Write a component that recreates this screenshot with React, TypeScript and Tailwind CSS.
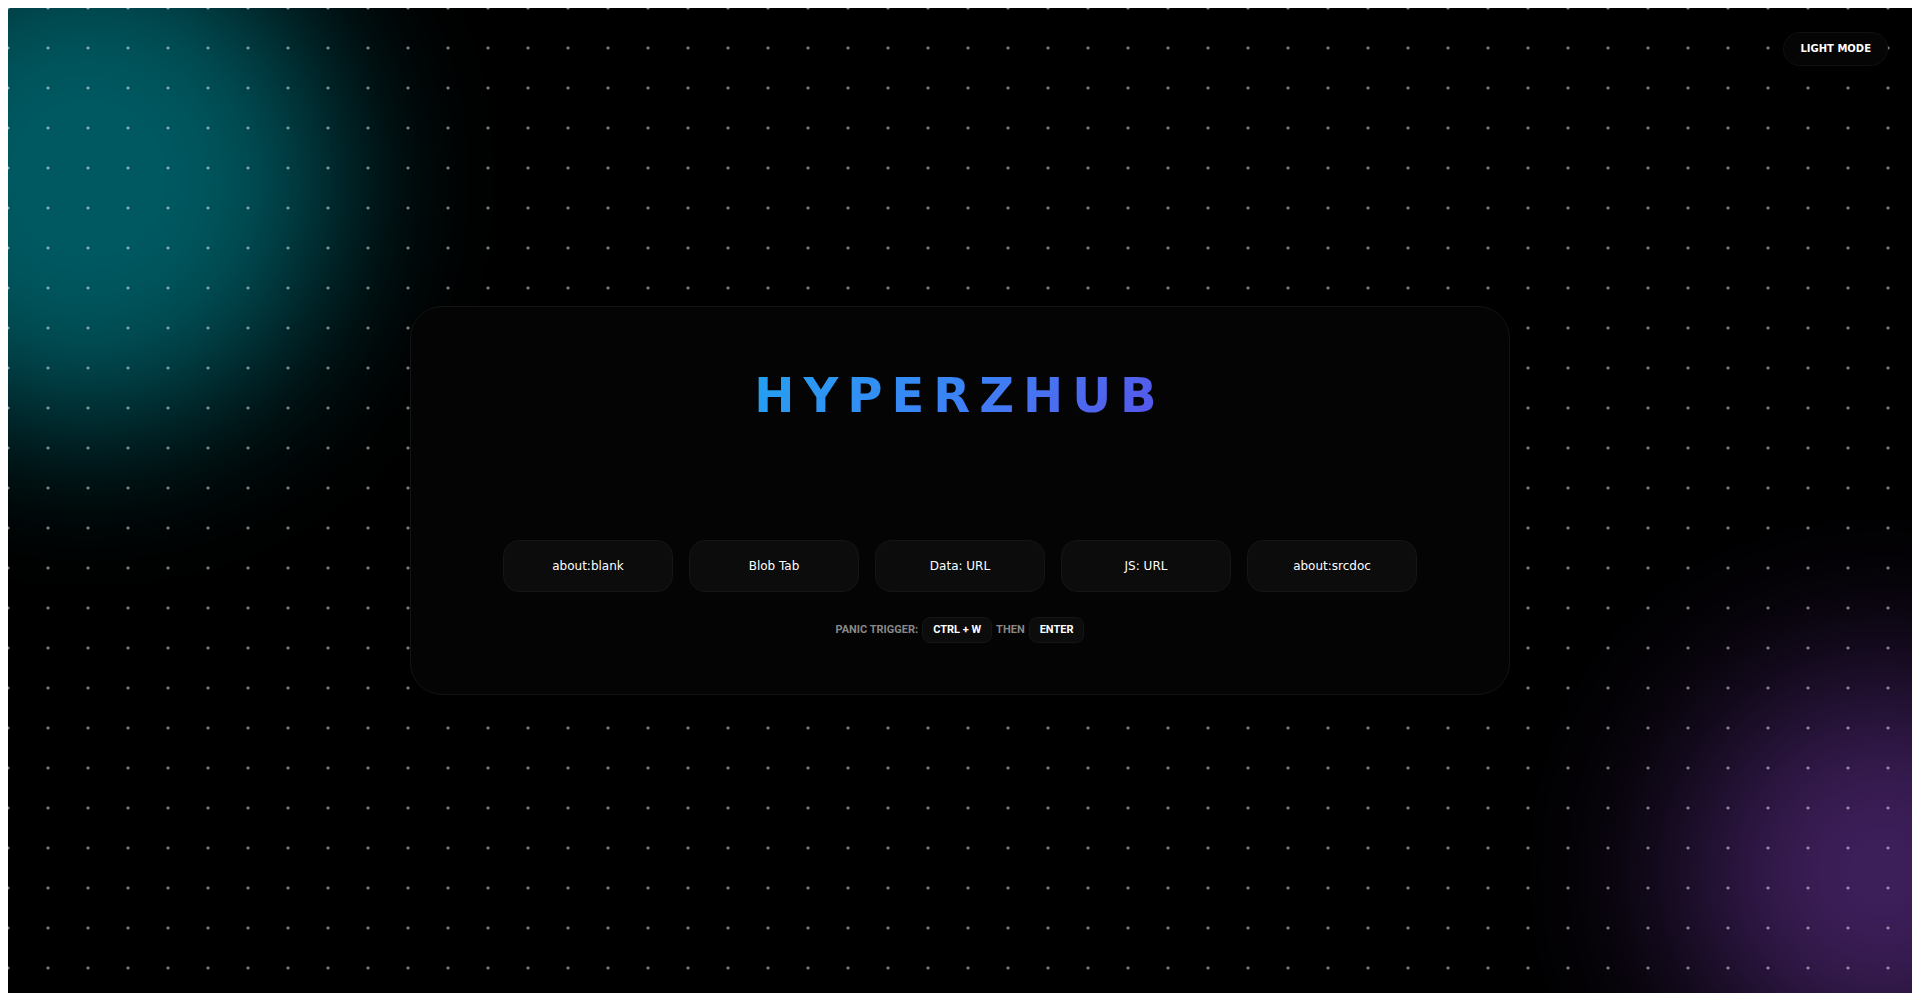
const launchers = ["about:blank", "Blob Tab", "Data: URL", "JS: URL", "about:srcdoc"];

function Key({ children }: { children: string }) {
  return (
    <kbd className="rounded-lg border border-[#151515] bg-[#0c0c0c] px-2.5 py-1 font-[Roboto,sans-serif] leading-4 text-white">
      {children}
    </kbd>
  );
}

function Backdrop() {
  return (
    <div aria-hidden="true" className="pointer-events-none absolute inset-0 overflow-hidden">
      <div className="absolute -top-[8%] -left-[9%] size-[500px] rounded-full bg-[#00eaff] opacity-[0.38] blur-[80px]" />
      <div className="absolute -right-[9%] -bottom-[8%] size-[400px] rounded-full bg-[#a855f7] opacity-[0.38] blur-[90px]" />
      <div className="absolute inset-0 bg-[radial-gradient(circle_at_center,rgba(255,255,255,0.5)_1px,transparent_2px)] bg-[length:40px_40px] bg-[position:-20px_-20px]" />
    </div>
  );
}

export default function App() {
  return (
    <div className="min-h-screen bg-white px-2 pt-2 font-['DejaVu_Sans',sans-serif]">
      <div className="relative flex min-h-[calc(100vh-8px)] items-center justify-center overflow-hidden bg-black">
        <Backdrop />
        <button
          type="button"
          className="absolute top-6 right-6 rounded-full border border-[#111111] bg-[#050505] px-4 py-2 text-[10px] leading-4 font-bold text-white"
        >
          LIGHT MODE
        </button>
        <main className="relative flex w-full max-w-[1100px] flex-col items-center rounded-[32px] border border-[#131313] bg-[#040404] px-6 pt-14 pb-[51px]">
          <h1 className="bg-linear-135 from-[#1fa2f0] via-[#3b82f6] to-[#5650e8] bg-clip-text text-5xl leading-[64px] font-bold tracking-[9px] text-transparent">
            HYPERZHUB
          </h1>
          <div className="mt-[113px] flex flex-wrap justify-center gap-4">
            {launchers.map((name) => (
              <button
                key={name}
                type="button"
                className="h-13 w-[170px] rounded-2xl border border-[#151515] bg-[#0c0c0c] text-xs text-white"
              >
                {name}
              </button>
            ))}
          </div>
          <p className="mt-[25px] flex items-center gap-1 font-[Roboto,sans-serif] text-[11px] font-bold text-[#888888]">
            PANIC TRIGGER: <Key>CTRL + W</Key> THEN <Key>ENTER</Key>
          </p>
        </main>
      </div>
    </div>
  );
}
